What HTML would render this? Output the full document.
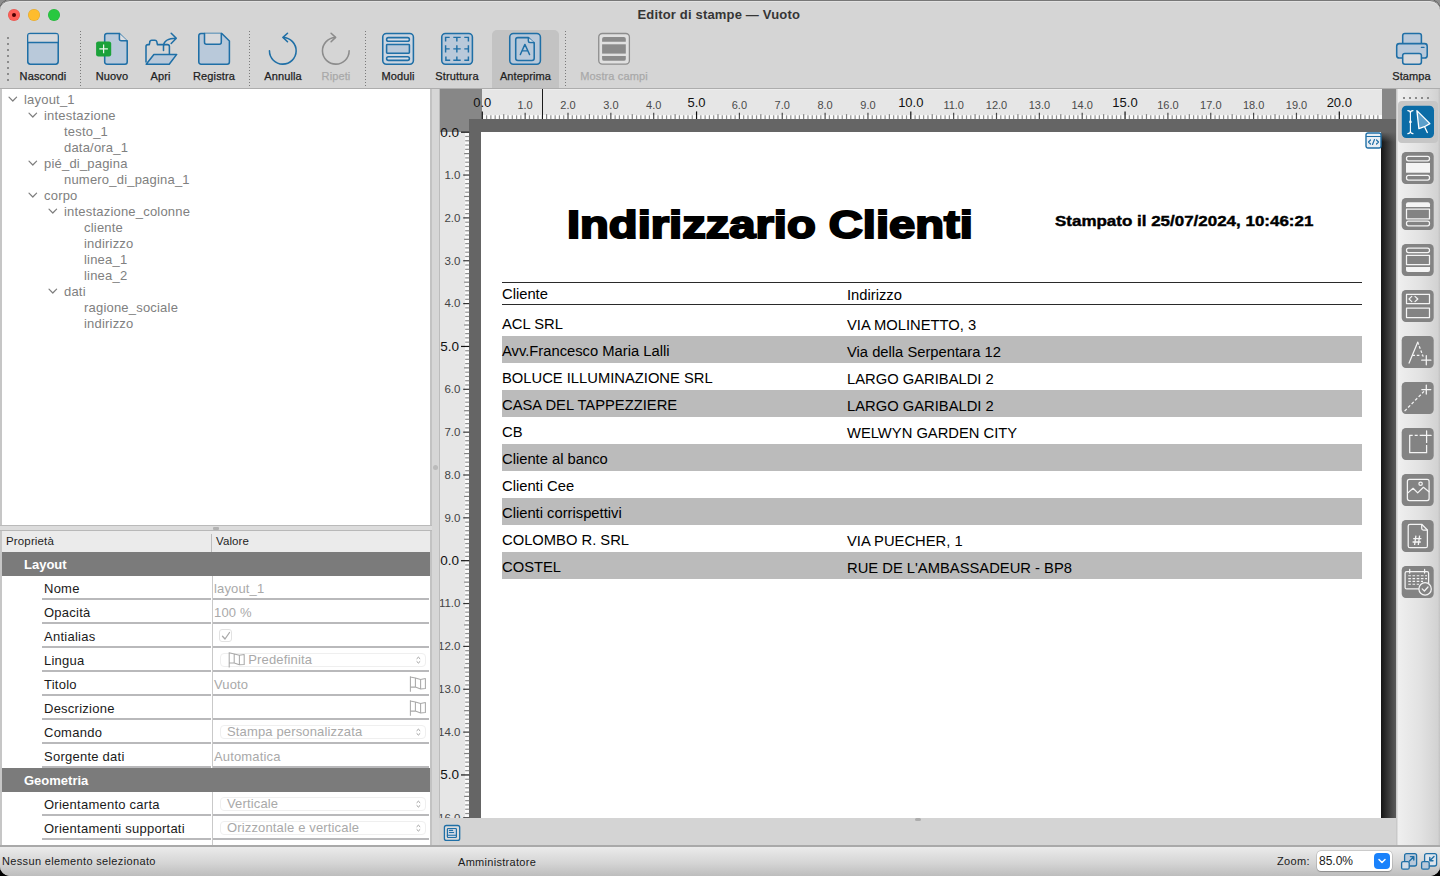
<!DOCTYPE html><html><head><meta charset="utf-8"><title>Editor di stampe</title><style>
*{box-sizing:border-box;margin:0;padding:0}
html,body{width:1440px;height:876px;overflow:hidden;background:#000}
body{font-family:"Liberation Sans",sans-serif;position:relative}
.a{position:absolute}
.win{position:absolute;left:0;top:0;width:1440px;height:876px;border-radius:10px;overflow:hidden;background:#d5d5d5}
.t{position:absolute;white-space:nowrap;line-height:1}
.lbl{position:absolute;font-size:11px;color:#222;-webkit-text-stroke:.25px currentColor;letter-spacing:.12px;white-space:nowrap;line-height:1;transform:translateX(-50%)}
.dis{color:#a9a9a9}
.sep{position:absolute;width:2px;background-image:linear-gradient(#7d7d7d 50%,transparent 50%);background-size:2px 4px;opacity:.75}
.tree{font-size:13px;color:#808080;letter-spacing:.2px}
.prop{font-size:13px;color:#1a1a1a;letter-spacing:.25px}
.val{font-size:13px;color:#a9a9a9;letter-spacing:.15px}
.rpt{font-size:14.75px;color:#000}
</style></head><body>
<div class="a" style="left:0;top:0;width:12px;height:12px;background:radial-gradient(circle at 11px 11px,#111 0,#111 10.5px,#8e8e8e 12.5px)"></div>
<div class="a" style="left:1428px;top:0;width:12px;height:12px;background:radial-gradient(circle at 1px 11px,#111 0,#111 10.5px,#8e8e8e 12.5px)"></div>
<div class="win">
<div class="a" style="left:0;top:0;width:1440px;height:88px;background:#d5d5d5"></div>
<div class="a" style="left:0;top:88px;width:1440px;height:1px;background:#adadad"></div>
<div class="a" style="left:7.5px;top:8.5px;width:12px;height:12px;border-radius:50%;background:#fe5f57;box-shadow:inset 0 0 0 .5px rgba(0,0,0,.12)"></div>
<div class="a" style="left:28px;top:8.5px;width:12px;height:12px;border-radius:50%;background:#febc2e;box-shadow:inset 0 0 0 .5px rgba(0,0,0,.12)"></div>
<div class="a" style="left:48px;top:8.5px;width:12px;height:12px;border-radius:50%;background:#28c840;box-shadow:inset 0 0 0 .5px rgba(0,0,0,.12)"></div>
<div class="a" style="left:11.5px;top:12.5px;width:4px;height:4px;border-radius:50%;background:#4d0000"></div>
<div class="t" style="left:637.5px;top:8px;font-size:13px;font-weight:bold;color:#363636;letter-spacing:.17px">Editor di stampe — Vuoto</div>
<div class="a" style="left:7px;top:37px;width:2px;height:45px;background-image:linear-gradient(#8c8c8c 2px,transparent 2px);background-size:2px 6px"></div>
<div class="a" style="left:80px;top:31px;width:1px;height:56px;background-image:linear-gradient(#7a7a7a 1.2px,transparent 1.2px);background-size:1px 3px"></div>
<div class="a" style="left:249px;top:31px;width:1px;height:56px;background-image:linear-gradient(#7a7a7a 1.2px,transparent 1.2px);background-size:1px 3px"></div>
<div class="a" style="left:365px;top:31px;width:1px;height:56px;background-image:linear-gradient(#7a7a7a 1.2px,transparent 1.2px);background-size:1px 3px"></div>
<div class="a" style="left:565px;top:31px;width:1px;height:56px;background-image:linear-gradient(#7a7a7a 1.2px,transparent 1.2px);background-size:1px 3px"></div>
<div class="a" style="left:492px;top:30px;width:67px;height:58px;background:#c3c3c3;border-radius:5px 5px 0 0"></div>
<svg class="a" style="left:20px;top:28px" width="46" height="42" viewBox="20 28 46 42" fill="none" stroke-linejoin="round" stroke-linecap="round"><rect x="27.75" y="33.5" width="30.45" height="30.7" rx="2.6" fill="#b9c9da" stroke="#1f6fa6" stroke-width="1.55"/><rect x="28.5" y="34.3" width="29" height="8" fill="#d7d9dc"/><path d="M27.75 42.4H58.2" stroke="#1f6fa6" stroke-width="1.55"/></svg>
<svg class="a" style="left:90px;top:28px" width="44" height="42" viewBox="90 28 44 42" fill="none" stroke-linejoin="round" stroke-linecap="round"><path d="M106.9 33.5H119.3L127.2 41.2V62a2.2 2.2 0 0 1-2.2 2.2H106.9a2.2 2.2 0 0 1-2.2-2.2V35.7a2.2 2.2 0 0 1 2.2-2.2Z" fill="#b9c9da" stroke="#1f6fa6" stroke-width="1.55"/><path d="M119.4 33.6V39a1.8 1.8 0 0 0 1.8 1.8H127.1" fill="#dedfe2" stroke="#1f6fa6" stroke-width="1.55"/><rect x="96.1" y="41.4" width="15.1" height="15.1" rx="2.2" fill="#1ba23a"/><path d="M103.6 44.6V53.2M99.3 48.9H107.9" stroke="#eef7ee" stroke-width="1.25" stroke-linecap="butt"/></svg>
<svg class="a" style="left:140px;top:28px" width="44" height="42" viewBox="140 28 44 42" fill="none" stroke-linejoin="round" stroke-linecap="round"><path d="M146 62V46.6a2 2 0 0 1 2-2H149.3L149.8 42a1.9 1.9 0 0 1 1.9-1.8H155a1.9 1.9 0 0 1 1.8 1.4L157.4 44.6H167.4a2 2 0 0 1 2 2V54.4" stroke="#1f6fa6" stroke-width="1.55"/><path d="M146.2 64.2L153.9 54.4H176.7L169.2 64.2Z" fill="#b9c9da" stroke="#1f6fa6" stroke-width="1.55"/><path d="M163.5 50.5V46.2C163.5 41.5 168 38.3 176.2 38.3M171.2 33.3L176.3 38.3L171.2 43.5" stroke="#1f6fa6" stroke-width="1.55"/></svg>
<svg class="a" style="left:192px;top:28px" width="44" height="42" viewBox="192 28 44 42" fill="none" stroke-linejoin="round" stroke-linecap="round"><path d="M201 33.5H221.8L229.4 41V62a2.2 2.2 0 0 1-2.2 2.2H201a2.2 2.2 0 0 1-2.2-2.2V35.7a2.2 2.2 0 0 1 2.2-2.2Z" fill="#b9c9da" stroke="#1f6fa6" stroke-width="1.55"/><path d="M204.5 33.6V42.2a2 2 0 0 0 2 2H219.3a2 2 0 0 0 2-2V33.6" fill="#d7d9dc" stroke="#1f6fa6" stroke-width="1.55"/></svg>
<svg class="a" style="left:262px;top:28px" width="42" height="42" viewBox="262 28 42 42" fill="none" stroke-linejoin="round" stroke-linecap="round"><path d="M269.45 50.8A13.35 13.35 0 1 0 283.2 37.45" stroke="#1f6fa6" stroke-width="1.55"/><path d="M287.5 33.2L283 37.4L287.5 41.8" stroke="#1f6fa6" stroke-width="1.55"/></svg>
<svg class="a" style="left:315px;top:28px" width="42" height="42" viewBox="315 28 42 42" fill="none" stroke-linejoin="round" stroke-linecap="round"><path d="M349.15 50.8A13.35 13.35 0 1 1 335.4 37.45" stroke="#8c8c8c" stroke-width="1.55"/><path d="M331.1 33.2L335.6 37.4L331.1 41.8" stroke="#8c8c8c" stroke-width="1.55"/></svg>
<svg class="a" style="left:376px;top:28px" width="44" height="42" viewBox="376 28 44 42" fill="none" stroke-linejoin="round" stroke-linecap="round"><rect x="382.75" y="33.5" width="30.65" height="30.7" rx="3.6" fill="#cdd6e1" stroke="#1f6fa6" stroke-width="1.55"/><rect x="386.6" y="37.6" width="22.8" height="3.6" rx="1.8" fill="#d6dde6" stroke="#1f6fa6" stroke-width="1.55"/><rect x="386.6" y="44.5" width="22.8" height="8.7" rx=".6" fill="#b9c9da" stroke="#1f6fa6" stroke-width="1.55"/><rect x="386.6" y="56.8" width="22.8" height="3.6" rx="1.8" fill="#d6dde6" stroke="#1f6fa6" stroke-width="1.55"/></svg>
<svg class="a" style="left:435px;top:28px" width="44" height="42" viewBox="435 28 44 42" fill="none" stroke-linejoin="round" stroke-linecap="round"><rect x="441.75" y="33.5" width="30.65" height="30.7" rx="3.6" fill="#b9c9da" stroke="#1f6fa6" stroke-width="1.55"/><path d="M445.6 41.4V37.35H449.7M453.3 37.35H460.7M456.85 37.35V41.4M464.3 37.35H468.4V41.4M445.6 45.3V52.6M445.6 48.85H449.7M453.3 48.85H460.7M456.85 45.3V52.6M464.3 48.85H468.4M468.4 45.3V52.6M445.9 56.5V60.3H450.2M453.3 60.3H460.7M456.85 56.5V60.3M464.3 60.3H468.4V56.5" stroke="#1f6fa6" stroke-width="1.45" stroke-linecap="butt" stroke-linejoin="miter"/></svg>
<svg class="a" style="left:503px;top:28px" width="44" height="42" viewBox="503 28 44 42" fill="none" stroke-linejoin="round" stroke-linecap="round"><rect x="509.75" y="33.5" width="30.65" height="30.7" rx="3.6" fill="#b9c9da" stroke="#1f6fa6" stroke-width="1.55"/><path d="M517.9 37.6H528.4L534.2 43.3V58.2a2.2 2.2 0 0 1-2.2 2.2H517.9a2.2 2.2 0 0 1-2.2-2.2V39.8a2.2 2.2 0 0 1 2.2-2.2Z" fill="#b9c9da" stroke="#1f6fa6" stroke-width="1.55"/><path d="M528.4 37.7V41a1.5 1.5 0 0 0 1.5 1.5H534.1" fill="#dde3ea" stroke="#1f6fa6" stroke-width="1.55"/><path d="M520.3 54.6L524.9 44.4L529.6 54.6M522.3 50.9H527.6" stroke="#1f6fa6" stroke-width="1.4"/></svg>
<svg class="a" style="left:592px;top:28px" width="44" height="42" viewBox="592 28 44 42" fill="none" stroke-linejoin="round" stroke-linecap="round"><rect x="598.75" y="33.5" width="30.65" height="30.7" rx="3.6" fill="#e0e0e0" stroke="#8d8d8d" stroke-width="1.3"/><path d="M604 37.1H623.9a1.9 1.9 0 0 1 1.9 1.9V41.7H602.1V39a1.9 1.9 0 0 1 1.9-1.9Z" fill="#8b8b8b"/><rect x="602.1" y="44.3" width="23.7" height="9.3" fill="#8b8b8b"/><path d="M602.1 56H625.8V58.9a1.9 1.9 0 0 1-1.9 1.9H604a1.9 1.9 0 0 1-1.9-1.9Z" fill="#8b8b8b"/></svg>
<svg class="a" style="left:1390px;top:28px" width="44" height="42" viewBox="1390 28 44 42" fill="none" stroke-linejoin="round" stroke-linecap="round"><rect x="1402.7" y="33.5" width="18.7" height="12" rx="2.2" fill="#b9c9da" stroke="#1f6fa6" stroke-width="1.55"/><rect x="1396.7" y="43.6" width="30.5" height="14.4" rx="2.6" fill="#b9c9da" stroke="#1f6fa6" stroke-width="1.55"/><rect x="1402.7" y="53.4" width="18.7" height="10.8" rx="2.2" fill="#d9dadd" stroke="#1f6fa6" stroke-width="1.55"/><path d="M1421.4 47.4H1424" stroke="#1f6fa6" stroke-width="1.3"/></svg>
<div class="lbl" style="left:43px;top:71px">Nascondi</div>
<div class="lbl" style="left:112px;top:71px">Nuovo</div>
<div class="lbl" style="left:160.5px;top:71px">Apri</div>
<div class="lbl" style="left:214px;top:71px">Registra</div>
<div class="lbl" style="left:283px;top:71px">Annulla</div>
<div class="lbl dis" style="left:336px;top:71px">Ripeti</div>
<div class="lbl" style="left:398px;top:71px">Moduli</div>
<div class="lbl" style="left:457px;top:71px">Struttura</div>
<div class="lbl" style="left:525.5px;top:71px">Anteprima</div>
<div class="lbl dis" style="left:614px;top:71px">Mostra campi</div>
<div class="lbl" style="left:1411.5px;top:71px">Stampa</div>
<div class="a" style="left:0;top:89px;width:432px;height:437px;background:#fff;border-left:2px solid #c6c6c6;border-right:2px solid #c2c2c2"></div>
<div class="t tree" style="left:24px;top:93px">layout_1</div>
<svg class="a" style="left:8px;top:96px;" width="10" height="7" viewBox="0 0 10 7" fill="none" stroke-linejoin="round" stroke-linecap="round"><path d="M1 1.2L4.8 5L8.6 1.2" stroke="#7d7d7d" stroke-width="1.2"/></svg>
<div class="t tree" style="left:44px;top:109px">intestazione</div>
<svg class="a" style="left:28px;top:112px;" width="10" height="7" viewBox="0 0 10 7" fill="none" stroke-linejoin="round" stroke-linecap="round"><path d="M1 1.2L4.8 5L8.6 1.2" stroke="#7d7d7d" stroke-width="1.2"/></svg>
<div class="t tree" style="left:64px;top:125px">testo_1</div>
<div class="t tree" style="left:64px;top:141px">data/ora_1</div>
<div class="t tree" style="left:44px;top:157px">pié_di_pagina</div>
<svg class="a" style="left:28px;top:160px;" width="10" height="7" viewBox="0 0 10 7" fill="none" stroke-linejoin="round" stroke-linecap="round"><path d="M1 1.2L4.8 5L8.6 1.2" stroke="#7d7d7d" stroke-width="1.2"/></svg>
<div class="t tree" style="left:64px;top:173px">numero_di_pagina_1</div>
<div class="t tree" style="left:44px;top:189px">corpo</div>
<svg class="a" style="left:28px;top:192px;" width="10" height="7" viewBox="0 0 10 7" fill="none" stroke-linejoin="round" stroke-linecap="round"><path d="M1 1.2L4.8 5L8.6 1.2" stroke="#7d7d7d" stroke-width="1.2"/></svg>
<div class="t tree" style="left:64px;top:205px">intestazione_colonne</div>
<svg class="a" style="left:48px;top:208px;" width="10" height="7" viewBox="0 0 10 7" fill="none" stroke-linejoin="round" stroke-linecap="round"><path d="M1 1.2L4.8 5L8.6 1.2" stroke="#7d7d7d" stroke-width="1.2"/></svg>
<div class="t tree" style="left:84px;top:221px">cliente</div>
<div class="t tree" style="left:84px;top:237px">indirizzo</div>
<div class="t tree" style="left:84px;top:253px">linea_1</div>
<div class="t tree" style="left:84px;top:269px">linea_2</div>
<div class="t tree" style="left:64px;top:285px">dati</div>
<svg class="a" style="left:48px;top:288px;" width="10" height="7" viewBox="0 0 10 7" fill="none" stroke-linejoin="round" stroke-linecap="round"><path d="M1 1.2L4.8 5L8.6 1.2" stroke="#7d7d7d" stroke-width="1.2"/></svg>
<div class="t tree" style="left:84px;top:301px">ragione_sociale</div>
<div class="t tree" style="left:84px;top:317px">indirizzo</div>
<div class="a" style="left:0;top:525px;width:432px;height:6px;background:#dcdcdc;border-top:1.6px solid #bababa;border-bottom:1.6px solid #b8b8b8"></div>
<div class="a" style="left:213px;top:527px;width:5.5px;height:2.5px;background:#b2b2b2;border-radius:1px"></div>
<div class="a" style="left:0;top:531px;width:432px;height:314px;background:#fff;border-left:2px solid #c6c6c6;border-right:2px solid #c2c2c2"></div>
<div class="a" style="left:2px;top:531px;width:428px;height:21px;background:#ebebeb"></div>
<div class="a" style="left:211px;top:533.5px;width:1px;height:18px;background:#bdbdbd"></div>
<div class="t" style="left:6px;top:535.5px;font-size:11.5px;color:#1e1e1e;letter-spacing:.15px">Proprietà</div>
<div class="t" style="left:216px;top:535.5px;font-size:11.5px;color:#1e1e1e;letter-spacing:.1px">Valore</div>
<div class="a" style="left:2px;top:552px;width:428px;height:24px;background:#7b7b7b"></div>
<div class="t" style="left:24px;top:558px;font-size:13px;font-weight:bold;color:#fff">Layout</div>
<div class="a" style="left:42px;top:598px;width:169px;height:2px;background:#b9b9bb"></div>
<div class="a" style="left:213px;top:598px;width:216px;height:2px;background:#b9b9bb"></div>
<div class="a" style="left:212px;top:576px;width:1px;height:24px;background:#c9c9c9"></div>
<div class="t prop" style="left:44px;top:582px">Nome</div>
<div class="t val" style="left:214px;top:582px">layout_1</div>
<div class="a" style="left:42px;top:622px;width:169px;height:2px;background:#b9b9bb"></div>
<div class="a" style="left:213px;top:622px;width:216px;height:2px;background:#b9b9bb"></div>
<div class="a" style="left:212px;top:600px;width:1px;height:24px;background:#c9c9c9"></div>
<div class="t prop" style="left:44px;top:606px">Opacità</div>
<div class="t val" style="left:214px;top:606px">100 %</div>
<div class="a" style="left:42px;top:646px;width:169px;height:2px;background:#b9b9bb"></div>
<div class="a" style="left:213px;top:646px;width:216px;height:2px;background:#b9b9bb"></div>
<div class="a" style="left:212px;top:624px;width:1px;height:24px;background:#c9c9c9"></div>
<div class="t prop" style="left:44px;top:630px">Antialias</div>
<div class="a" style="left:219px;top:629px;width:13px;height:13px;border:1px solid #e2e2e2;border-radius:3px;background:#fff"></div>
<svg class="a" style="left:220px;top:630px;" width="12" height="12" viewBox="0 0 12 12" fill="none" stroke-linejoin="round" stroke-linecap="round"><path d="M2.5 6.3L5 9L9.5 2.5" stroke="#a9a9a9" stroke-width="1.3"/></svg>
<div class="a" style="left:42px;top:670px;width:169px;height:2px;background:#b9b9bb"></div>
<div class="a" style="left:213px;top:670px;width:216px;height:2px;background:#b9b9bb"></div>
<div class="a" style="left:212px;top:648px;width:1px;height:24px;background:#c9c9c9"></div>
<div class="t prop" style="left:44px;top:654px">Lingua</div>
<div class="a" style="left:220px;top:652.5px;width:206px;height:14.5px;border:1px solid #efefef;border-radius:4px;background:#fff"></div>
<svg class="a" style="left:0;top:0" width="440" height="876" fill="none"><path d="M229.2 652.2V667.6M229.2 652.8000000000001L234.2 653.9000000000001L239.39999999999998 655.3000000000001L244.2 654.5V664.5L239.39999999999998 664.8000000000001L234.2 663.0L229.2 663.0M234.2 653.9000000000001V663.0M239.39999999999998 655.3000000000001V664.8000000000001" stroke="#a9a9a9" stroke-width="1.05" stroke-linejoin="round"/></svg>
<div class="t val" style="left:248.3px;top:653.4px">Predefinita</div>
<svg class="a" style="left:414px;top:653px;" width="8" height="14" viewBox="0 0 8 14" fill="none" stroke-linejoin="round" stroke-linecap="round"><path d="M2.9 5.6L4.4 4.2L5.9 5.6M2.9 8.6L4.4 10L5.9 8.6" stroke="#9c9c9c" stroke-width="1"/></svg>
<div class="a" style="left:42px;top:694px;width:169px;height:2px;background:#b9b9bb"></div>
<div class="a" style="left:213px;top:694px;width:216px;height:2px;background:#b9b9bb"></div>
<div class="a" style="left:212px;top:672px;width:1px;height:24px;background:#c9c9c9"></div>
<div class="t prop" style="left:44px;top:678px">Titolo</div>
<div class="t val" style="left:214px;top:678px">Vuoto</div>
<svg class="a" style="left:0;top:0" width="440" height="876" fill="none"><path d="M410.4 676.3V691.6999999999999M410.4 676.9L415.4 678.0L420.59999999999997 679.4L425.4 678.5999999999999V688.5999999999999L420.59999999999997 688.9L415.4 687.0999999999999L410.4 687.0999999999999M415.4 678.0V687.0999999999999M420.59999999999997 679.4V688.9" stroke="#a9a9a9" stroke-width="1.05" stroke-linejoin="round"/></svg>
<div class="a" style="left:42px;top:718px;width:169px;height:2px;background:#b9b9bb"></div>
<div class="a" style="left:213px;top:718px;width:216px;height:2px;background:#b9b9bb"></div>
<div class="a" style="left:212px;top:696px;width:1px;height:24px;background:#c9c9c9"></div>
<div class="t prop" style="left:44px;top:702px">Descrizione</div>
<svg class="a" style="left:0;top:0" width="440" height="876" fill="none"><path d="M410.4 700.3V715.6999999999999M410.4 700.9L415.4 702.0L420.59999999999997 703.4L425.4 702.5999999999999V712.5999999999999L420.59999999999997 712.9L415.4 711.0999999999999L410.4 711.0999999999999M415.4 702.0V711.0999999999999M420.59999999999997 703.4V712.9" stroke="#a9a9a9" stroke-width="1.05" stroke-linejoin="round"/></svg>
<div class="a" style="left:42px;top:742px;width:169px;height:2px;background:#b9b9bb"></div>
<div class="a" style="left:213px;top:742px;width:216px;height:2px;background:#b9b9bb"></div>
<div class="a" style="left:212px;top:720px;width:1px;height:24px;background:#c9c9c9"></div>
<div class="t prop" style="left:44px;top:726px">Comando</div>
<div class="a" style="left:220px;top:724.5px;width:206px;height:14.5px;border:1px solid #efefef;border-radius:4px;background:#fff"></div>
<div class="t val" style="left:227px;top:725.4px">Stampa personalizzata</div>
<svg class="a" style="left:414px;top:725px;" width="8" height="14" viewBox="0 0 8 14" fill="none" stroke-linejoin="round" stroke-linecap="round"><path d="M2.9 5.6L4.4 4.2L5.9 5.6M2.9 8.6L4.4 10L5.9 8.6" stroke="#9c9c9c" stroke-width="1"/></svg>
<div class="a" style="left:42px;top:766px;width:169px;height:2px;background:#b9b9bb"></div>
<div class="a" style="left:213px;top:766px;width:216px;height:2px;background:#b9b9bb"></div>
<div class="a" style="left:212px;top:744px;width:1px;height:24px;background:#c9c9c9"></div>
<div class="t prop" style="left:44px;top:750px">Sorgente dati</div>
<div class="t val" style="left:214px;top:750px">Automatica</div>
<div class="a" style="left:2px;top:768px;width:428px;height:24px;background:#7b7b7b"></div>
<div class="t" style="left:24px;top:774px;font-size:13px;font-weight:bold;color:#fff">Geometria</div>
<div class="a" style="left:42px;top:814px;width:169px;height:2px;background:#b9b9bb"></div>
<div class="a" style="left:213px;top:814px;width:216px;height:2px;background:#b9b9bb"></div>
<div class="a" style="left:212px;top:792px;width:1px;height:24px;background:#c9c9c9"></div>
<div class="t prop" style="left:44px;top:798px">Orientamento carta</div>
<div class="a" style="left:220px;top:796.5px;width:206px;height:14.5px;border:1px solid #efefef;border-radius:4px;background:#fff"></div>
<div class="t val" style="left:227px;top:797.4px">Verticale</div>
<svg class="a" style="left:414px;top:797px;" width="8" height="14" viewBox="0 0 8 14" fill="none" stroke-linejoin="round" stroke-linecap="round"><path d="M2.9 5.6L4.4 4.2L5.9 5.6M2.9 8.6L4.4 10L5.9 8.6" stroke="#9c9c9c" stroke-width="1"/></svg>
<div class="a" style="left:42px;top:838px;width:169px;height:2px;background:#b9b9bb"></div>
<div class="a" style="left:213px;top:838px;width:216px;height:2px;background:#b9b9bb"></div>
<div class="a" style="left:212px;top:816px;width:1px;height:24px;background:#c9c9c9"></div>
<div class="t prop" style="left:44px;top:822px">Orientamenti supportati</div>
<div class="a" style="left:220px;top:820.5px;width:206px;height:14.5px;border:1px solid #efefef;border-radius:4px;background:#fff"></div>
<div class="t val" style="left:227px;top:821.4px">Orizzontale e verticale</div>
<svg class="a" style="left:414px;top:821px;" width="8" height="14" viewBox="0 0 8 14" fill="none" stroke-linejoin="round" stroke-linecap="round"><path d="M2.9 5.6L4.4 4.2L5.9 5.6M2.9 8.6L4.4 10L5.9 8.6" stroke="#9c9c9c" stroke-width="1"/></svg>
<div class="a" style="left:42px;top:862px;width:169px;height:2px;background:#b9b9bb"></div>
<div class="a" style="left:213px;top:862px;width:216px;height:2px;background:#b9b9bb"></div>
<div class="a" style="left:212px;top:840px;width:1px;height:24px;background:#c9c9c9"></div>
<div class="a" style="left:432px;top:89px;width:7px;height:756px;background:#d6d6d6"></div>
<div class="a" style="left:439px;top:89px;width:1px;height:729px;background:#bdbdbd"></div>
<div class="a" style="left:433px;top:465px;width:5px;height:5px;background:#bababa;border-radius:50%"></div>
<div class="a" style="left:440px;top:89px;width:956px;height:729px;background:#656565;overflow:hidden">
<div class="a" style="left:41.30000000000001px;top:42.5px;width:900.0px;height:800px;background:#fff"></div>
<div class="a" style="left:941.3px;top:42.5px;width:14.7px;height:800px;background:linear-gradient(90deg,#141414,#2e2e2e 35%,#4a4a4a 75%,#5a5a5a)"></div>
<div class="a" style="left:941.3px;top:42.5px;width:14.7px;height:10px;background:linear-gradient(#656565,rgba(101,101,101,0))"></div>
</div>
<div class="a" style="left:440px;top:89px;width:956px;height:30px;background:#878787"></div>
<div class="a" style="left:482.3px;top:89px;width:899.7px;height:30px;background:#e6e6e6"></div>
<div class="a" style="left:482.3px;top:89px;width:899.7px;height:1px;background:#ededed"></div>
<div class="a" style="left:482.3px;top:115px;width:899.7px;height:4px;background:#fbfbfb"></div>
<div class="a" style="left:440px;top:89px;width:29.2px;height:729px;background:#878787"></div>
<div class="a" style="left:440px;top:131.7px;width:29.2px;height:687px;background:#e6e6e6"></div>
<div class="a" style="left:465px;top:131.7px;width:4.2px;height:687px;background:#fbfbfb"></div>
<div class="a" style="left:439px;top:89px;width:1px;height:729px;background:#bcbcbc"></div>
<svg class="a" style="left:0;top:0" width="1440" height="876"><path d="M482.30 111.4V119" stroke="#111" stroke-width="1.2"/><path d="M486.59 115.3V119" stroke="#8e8e8e" stroke-width="1.2"/><path d="M490.87 115.3V119" stroke="#8e8e8e" stroke-width="1.2"/><path d="M495.16 115.3V119" stroke="#8e8e8e" stroke-width="1.2"/><path d="M499.44 115.3V119" stroke="#8e8e8e" stroke-width="1.2"/><path d="M503.73 114.2V119" stroke="#7d7d7d" stroke-width="1.2"/><path d="M508.01 115.3V119" stroke="#8e8e8e" stroke-width="1.2"/><path d="M512.29 115.3V119" stroke="#8e8e8e" stroke-width="1.2"/><path d="M516.58 115.3V119" stroke="#8e8e8e" stroke-width="1.2"/><path d="M520.87 115.3V119" stroke="#8e8e8e" stroke-width="1.2"/><path d="M525.15 112.8V119" stroke="#4a4a4a" stroke-width="1.2"/><path d="M529.44 115.3V119" stroke="#8e8e8e" stroke-width="1.2"/><path d="M533.72 115.3V119" stroke="#8e8e8e" stroke-width="1.2"/><path d="M538.00 115.3V119" stroke="#8e8e8e" stroke-width="1.2"/><path d="M542.29 115.3V119" stroke="#8e8e8e" stroke-width="1.2"/><path d="M546.58 114.2V119" stroke="#7d7d7d" stroke-width="1.2"/><path d="M550.86 115.3V119" stroke="#8e8e8e" stroke-width="1.2"/><path d="M555.14 115.3V119" stroke="#8e8e8e" stroke-width="1.2"/><path d="M559.43 115.3V119" stroke="#8e8e8e" stroke-width="1.2"/><path d="M563.72 115.3V119" stroke="#8e8e8e" stroke-width="1.2"/><path d="M568.00 112.8V119" stroke="#4a4a4a" stroke-width="1.2"/><path d="M572.28 115.3V119" stroke="#8e8e8e" stroke-width="1.2"/><path d="M576.57 115.3V119" stroke="#8e8e8e" stroke-width="1.2"/><path d="M580.86 115.3V119" stroke="#8e8e8e" stroke-width="1.2"/><path d="M585.14 115.3V119" stroke="#8e8e8e" stroke-width="1.2"/><path d="M589.42 114.2V119" stroke="#7d7d7d" stroke-width="1.2"/><path d="M593.71 115.3V119" stroke="#8e8e8e" stroke-width="1.2"/><path d="M598.00 115.3V119" stroke="#8e8e8e" stroke-width="1.2"/><path d="M602.28 115.3V119" stroke="#8e8e8e" stroke-width="1.2"/><path d="M606.57 115.3V119" stroke="#8e8e8e" stroke-width="1.2"/><path d="M610.85 112.8V119" stroke="#4a4a4a" stroke-width="1.2"/><path d="M615.13 115.3V119" stroke="#8e8e8e" stroke-width="1.2"/><path d="M619.42 115.3V119" stroke="#8e8e8e" stroke-width="1.2"/><path d="M623.71 115.3V119" stroke="#8e8e8e" stroke-width="1.2"/><path d="M627.99 115.3V119" stroke="#8e8e8e" stroke-width="1.2"/><path d="M632.27 114.2V119" stroke="#7d7d7d" stroke-width="1.2"/><path d="M636.56 115.3V119" stroke="#8e8e8e" stroke-width="1.2"/><path d="M640.85 115.3V119" stroke="#8e8e8e" stroke-width="1.2"/><path d="M645.13 115.3V119" stroke="#8e8e8e" stroke-width="1.2"/><path d="M649.41 115.3V119" stroke="#8e8e8e" stroke-width="1.2"/><path d="M653.70 112.8V119" stroke="#4a4a4a" stroke-width="1.2"/><path d="M657.99 115.3V119" stroke="#8e8e8e" stroke-width="1.2"/><path d="M662.27 115.3V119" stroke="#8e8e8e" stroke-width="1.2"/><path d="M666.56 115.3V119" stroke="#8e8e8e" stroke-width="1.2"/><path d="M670.84 115.3V119" stroke="#8e8e8e" stroke-width="1.2"/><path d="M675.12 114.2V119" stroke="#7d7d7d" stroke-width="1.2"/><path d="M679.41 115.3V119" stroke="#8e8e8e" stroke-width="1.2"/><path d="M683.70 115.3V119" stroke="#8e8e8e" stroke-width="1.2"/><path d="M687.98 115.3V119" stroke="#8e8e8e" stroke-width="1.2"/><path d="M692.26 115.3V119" stroke="#8e8e8e" stroke-width="1.2"/><path d="M696.55 111.4V119" stroke="#111" stroke-width="1.2"/><path d="M700.84 115.3V119" stroke="#8e8e8e" stroke-width="1.2"/><path d="M705.12 115.3V119" stroke="#8e8e8e" stroke-width="1.2"/><path d="M709.40 115.3V119" stroke="#8e8e8e" stroke-width="1.2"/><path d="M713.69 115.3V119" stroke="#8e8e8e" stroke-width="1.2"/><path d="M717.98 114.2V119" stroke="#7d7d7d" stroke-width="1.2"/><path d="M722.26 115.3V119" stroke="#8e8e8e" stroke-width="1.2"/><path d="M726.55 115.3V119" stroke="#8e8e8e" stroke-width="1.2"/><path d="M730.83 115.3V119" stroke="#8e8e8e" stroke-width="1.2"/><path d="M735.12 115.3V119" stroke="#8e8e8e" stroke-width="1.2"/><path d="M739.40 112.8V119" stroke="#4a4a4a" stroke-width="1.2"/><path d="M743.68 115.3V119" stroke="#8e8e8e" stroke-width="1.2"/><path d="M747.97 115.3V119" stroke="#8e8e8e" stroke-width="1.2"/><path d="M752.26 115.3V119" stroke="#8e8e8e" stroke-width="1.2"/><path d="M756.54 115.3V119" stroke="#8e8e8e" stroke-width="1.2"/><path d="M760.83 114.2V119" stroke="#7d7d7d" stroke-width="1.2"/><path d="M765.11 115.3V119" stroke="#8e8e8e" stroke-width="1.2"/><path d="M769.39 115.3V119" stroke="#8e8e8e" stroke-width="1.2"/><path d="M773.68 115.3V119" stroke="#8e8e8e" stroke-width="1.2"/><path d="M777.97 115.3V119" stroke="#8e8e8e" stroke-width="1.2"/><path d="M782.25 112.8V119" stroke="#4a4a4a" stroke-width="1.2"/><path d="M786.54 115.3V119" stroke="#8e8e8e" stroke-width="1.2"/><path d="M790.82 115.3V119" stroke="#8e8e8e" stroke-width="1.2"/><path d="M795.11 115.3V119" stroke="#8e8e8e" stroke-width="1.2"/><path d="M799.39 115.3V119" stroke="#8e8e8e" stroke-width="1.2"/><path d="M803.67 114.2V119" stroke="#7d7d7d" stroke-width="1.2"/><path d="M807.96 115.3V119" stroke="#8e8e8e" stroke-width="1.2"/><path d="M812.25 115.3V119" stroke="#8e8e8e" stroke-width="1.2"/><path d="M816.53 115.3V119" stroke="#8e8e8e" stroke-width="1.2"/><path d="M820.82 115.3V119" stroke="#8e8e8e" stroke-width="1.2"/><path d="M825.10 112.8V119" stroke="#4a4a4a" stroke-width="1.2"/><path d="M829.38 115.3V119" stroke="#8e8e8e" stroke-width="1.2"/><path d="M833.67 115.3V119" stroke="#8e8e8e" stroke-width="1.2"/><path d="M837.96 115.3V119" stroke="#8e8e8e" stroke-width="1.2"/><path d="M842.24 115.3V119" stroke="#8e8e8e" stroke-width="1.2"/><path d="M846.53 114.2V119" stroke="#7d7d7d" stroke-width="1.2"/><path d="M850.81 115.3V119" stroke="#8e8e8e" stroke-width="1.2"/><path d="M855.10 115.3V119" stroke="#8e8e8e" stroke-width="1.2"/><path d="M859.38 115.3V119" stroke="#8e8e8e" stroke-width="1.2"/><path d="M863.66 115.3V119" stroke="#8e8e8e" stroke-width="1.2"/><path d="M867.95 112.8V119" stroke="#4a4a4a" stroke-width="1.2"/><path d="M872.24 115.3V119" stroke="#8e8e8e" stroke-width="1.2"/><path d="M876.52 115.3V119" stroke="#8e8e8e" stroke-width="1.2"/><path d="M880.81 115.3V119" stroke="#8e8e8e" stroke-width="1.2"/><path d="M885.09 115.3V119" stroke="#8e8e8e" stroke-width="1.2"/><path d="M889.38 114.2V119" stroke="#7d7d7d" stroke-width="1.2"/><path d="M893.66 115.3V119" stroke="#8e8e8e" stroke-width="1.2"/><path d="M897.94 115.3V119" stroke="#8e8e8e" stroke-width="1.2"/><path d="M902.23 115.3V119" stroke="#8e8e8e" stroke-width="1.2"/><path d="M906.52 115.3V119" stroke="#8e8e8e" stroke-width="1.2"/><path d="M910.80 111.4V119" stroke="#111" stroke-width="1.2"/><path d="M915.09 115.3V119" stroke="#8e8e8e" stroke-width="1.2"/><path d="M919.37 115.3V119" stroke="#8e8e8e" stroke-width="1.2"/><path d="M923.65 115.3V119" stroke="#8e8e8e" stroke-width="1.2"/><path d="M927.94 115.3V119" stroke="#8e8e8e" stroke-width="1.2"/><path d="M932.23 114.2V119" stroke="#7d7d7d" stroke-width="1.2"/><path d="M936.51 115.3V119" stroke="#8e8e8e" stroke-width="1.2"/><path d="M940.80 115.3V119" stroke="#8e8e8e" stroke-width="1.2"/><path d="M945.08 115.3V119" stroke="#8e8e8e" stroke-width="1.2"/><path d="M949.37 115.3V119" stroke="#8e8e8e" stroke-width="1.2"/><path d="M953.65 112.8V119" stroke="#4a4a4a" stroke-width="1.2"/><path d="M957.94 115.3V119" stroke="#8e8e8e" stroke-width="1.2"/><path d="M962.22 115.3V119" stroke="#8e8e8e" stroke-width="1.2"/><path d="M966.51 115.3V119" stroke="#8e8e8e" stroke-width="1.2"/><path d="M970.79 115.3V119" stroke="#8e8e8e" stroke-width="1.2"/><path d="M975.08 114.2V119" stroke="#7d7d7d" stroke-width="1.2"/><path d="M979.36 115.3V119" stroke="#8e8e8e" stroke-width="1.2"/><path d="M983.64 115.3V119" stroke="#8e8e8e" stroke-width="1.2"/><path d="M987.93 115.3V119" stroke="#8e8e8e" stroke-width="1.2"/><path d="M992.22 115.3V119" stroke="#8e8e8e" stroke-width="1.2"/><path d="M996.50 112.8V119" stroke="#4a4a4a" stroke-width="1.2"/><path d="M1000.79 115.3V119" stroke="#8e8e8e" stroke-width="1.2"/><path d="M1005.07 115.3V119" stroke="#8e8e8e" stroke-width="1.2"/><path d="M1009.36 115.3V119" stroke="#8e8e8e" stroke-width="1.2"/><path d="M1013.64 115.3V119" stroke="#8e8e8e" stroke-width="1.2"/><path d="M1017.92 114.2V119" stroke="#7d7d7d" stroke-width="1.2"/><path d="M1022.21 115.3V119" stroke="#8e8e8e" stroke-width="1.2"/><path d="M1026.49 115.3V119" stroke="#8e8e8e" stroke-width="1.2"/><path d="M1030.78 115.3V119" stroke="#8e8e8e" stroke-width="1.2"/><path d="M1035.07 115.3V119" stroke="#8e8e8e" stroke-width="1.2"/><path d="M1039.35 112.8V119" stroke="#4a4a4a" stroke-width="1.2"/><path d="M1043.63 115.3V119" stroke="#8e8e8e" stroke-width="1.2"/><path d="M1047.92 115.3V119" stroke="#8e8e8e" stroke-width="1.2"/><path d="M1052.20 115.3V119" stroke="#8e8e8e" stroke-width="1.2"/><path d="M1056.49 115.3V119" stroke="#8e8e8e" stroke-width="1.2"/><path d="M1060.78 114.2V119" stroke="#7d7d7d" stroke-width="1.2"/><path d="M1065.06 115.3V119" stroke="#8e8e8e" stroke-width="1.2"/><path d="M1069.35 115.3V119" stroke="#8e8e8e" stroke-width="1.2"/><path d="M1073.63 115.3V119" stroke="#8e8e8e" stroke-width="1.2"/><path d="M1077.91 115.3V119" stroke="#8e8e8e" stroke-width="1.2"/><path d="M1082.20 112.8V119" stroke="#4a4a4a" stroke-width="1.2"/><path d="M1086.49 115.3V119" stroke="#8e8e8e" stroke-width="1.2"/><path d="M1090.77 115.3V119" stroke="#8e8e8e" stroke-width="1.2"/><path d="M1095.06 115.3V119" stroke="#8e8e8e" stroke-width="1.2"/><path d="M1099.34 115.3V119" stroke="#8e8e8e" stroke-width="1.2"/><path d="M1103.62 114.2V119" stroke="#7d7d7d" stroke-width="1.2"/><path d="M1107.91 115.3V119" stroke="#8e8e8e" stroke-width="1.2"/><path d="M1112.19 115.3V119" stroke="#8e8e8e" stroke-width="1.2"/><path d="M1116.48 115.3V119" stroke="#8e8e8e" stroke-width="1.2"/><path d="M1120.77 115.3V119" stroke="#8e8e8e" stroke-width="1.2"/><path d="M1125.05 111.4V119" stroke="#111" stroke-width="1.2"/><path d="M1129.34 115.3V119" stroke="#8e8e8e" stroke-width="1.2"/><path d="M1133.62 115.3V119" stroke="#8e8e8e" stroke-width="1.2"/><path d="M1137.90 115.3V119" stroke="#8e8e8e" stroke-width="1.2"/><path d="M1142.19 115.3V119" stroke="#8e8e8e" stroke-width="1.2"/><path d="M1146.47 114.2V119" stroke="#7d7d7d" stroke-width="1.2"/><path d="M1150.76 115.3V119" stroke="#8e8e8e" stroke-width="1.2"/><path d="M1155.05 115.3V119" stroke="#8e8e8e" stroke-width="1.2"/><path d="M1159.33 115.3V119" stroke="#8e8e8e" stroke-width="1.2"/><path d="M1163.62 115.3V119" stroke="#8e8e8e" stroke-width="1.2"/><path d="M1167.90 112.8V119" stroke="#4a4a4a" stroke-width="1.2"/><path d="M1172.18 115.3V119" stroke="#8e8e8e" stroke-width="1.2"/><path d="M1176.47 115.3V119" stroke="#8e8e8e" stroke-width="1.2"/><path d="M1180.76 115.3V119" stroke="#8e8e8e" stroke-width="1.2"/><path d="M1185.04 115.3V119" stroke="#8e8e8e" stroke-width="1.2"/><path d="M1189.33 114.2V119" stroke="#7d7d7d" stroke-width="1.2"/><path d="M1193.61 115.3V119" stroke="#8e8e8e" stroke-width="1.2"/><path d="M1197.89 115.3V119" stroke="#8e8e8e" stroke-width="1.2"/><path d="M1202.18 115.3V119" stroke="#8e8e8e" stroke-width="1.2"/><path d="M1206.47 115.3V119" stroke="#8e8e8e" stroke-width="1.2"/><path d="M1210.75 112.8V119" stroke="#4a4a4a" stroke-width="1.2"/><path d="M1215.04 115.3V119" stroke="#8e8e8e" stroke-width="1.2"/><path d="M1219.32 115.3V119" stroke="#8e8e8e" stroke-width="1.2"/><path d="M1223.61 115.3V119" stroke="#8e8e8e" stroke-width="1.2"/><path d="M1227.89 115.3V119" stroke="#8e8e8e" stroke-width="1.2"/><path d="M1232.17 114.2V119" stroke="#7d7d7d" stroke-width="1.2"/><path d="M1236.46 115.3V119" stroke="#8e8e8e" stroke-width="1.2"/><path d="M1240.74 115.3V119" stroke="#8e8e8e" stroke-width="1.2"/><path d="M1245.03 115.3V119" stroke="#8e8e8e" stroke-width="1.2"/><path d="M1249.32 115.3V119" stroke="#8e8e8e" stroke-width="1.2"/><path d="M1253.60 112.8V119" stroke="#4a4a4a" stroke-width="1.2"/><path d="M1257.88 115.3V119" stroke="#8e8e8e" stroke-width="1.2"/><path d="M1262.17 115.3V119" stroke="#8e8e8e" stroke-width="1.2"/><path d="M1266.45 115.3V119" stroke="#8e8e8e" stroke-width="1.2"/><path d="M1270.74 115.3V119" stroke="#8e8e8e" stroke-width="1.2"/><path d="M1275.03 114.2V119" stroke="#7d7d7d" stroke-width="1.2"/><path d="M1279.31 115.3V119" stroke="#8e8e8e" stroke-width="1.2"/><path d="M1283.60 115.3V119" stroke="#8e8e8e" stroke-width="1.2"/><path d="M1287.88 115.3V119" stroke="#8e8e8e" stroke-width="1.2"/><path d="M1292.16 115.3V119" stroke="#8e8e8e" stroke-width="1.2"/><path d="M1296.45 112.8V119" stroke="#4a4a4a" stroke-width="1.2"/><path d="M1300.74 115.3V119" stroke="#8e8e8e" stroke-width="1.2"/><path d="M1305.02 115.3V119" stroke="#8e8e8e" stroke-width="1.2"/><path d="M1309.31 115.3V119" stroke="#8e8e8e" stroke-width="1.2"/><path d="M1313.59 115.3V119" stroke="#8e8e8e" stroke-width="1.2"/><path d="M1317.88 114.2V119" stroke="#7d7d7d" stroke-width="1.2"/><path d="M1322.16 115.3V119" stroke="#8e8e8e" stroke-width="1.2"/><path d="M1326.45 115.3V119" stroke="#8e8e8e" stroke-width="1.2"/><path d="M1330.73 115.3V119" stroke="#8e8e8e" stroke-width="1.2"/><path d="M1335.01 115.3V119" stroke="#8e8e8e" stroke-width="1.2"/><path d="M1339.30 111.4V119" stroke="#111" stroke-width="1.2"/><path d="M1343.59 115.3V119" stroke="#8e8e8e" stroke-width="1.2"/><path d="M1347.87 115.3V119" stroke="#8e8e8e" stroke-width="1.2"/><path d="M1352.16 115.3V119" stroke="#8e8e8e" stroke-width="1.2"/><path d="M1356.44 115.3V119" stroke="#8e8e8e" stroke-width="1.2"/><path d="M1360.72 114.2V119" stroke="#7d7d7d" stroke-width="1.2"/><path d="M1365.01 115.3V119" stroke="#8e8e8e" stroke-width="1.2"/><path d="M1369.30 115.3V119" stroke="#8e8e8e" stroke-width="1.2"/><path d="M1373.58 115.3V119" stroke="#8e8e8e" stroke-width="1.2"/><path d="M1377.87 115.3V119" stroke="#8e8e8e" stroke-width="1.2"/></svg>
<div class="t" style="left:482.3px;top:96px;font-size:13px;color:#111;transform:translateX(-50%)">0.0</div>
<div class="t" style="left:525.1px;top:100px;font-size:11px;color:#4a4a4a;transform:translateX(-50%)">1.0</div>
<div class="t" style="left:568.0px;top:100px;font-size:11px;color:#4a4a4a;transform:translateX(-50%)">2.0</div>
<div class="t" style="left:610.9px;top:100px;font-size:11px;color:#4a4a4a;transform:translateX(-50%)">3.0</div>
<div class="t" style="left:653.7px;top:100px;font-size:11px;color:#4a4a4a;transform:translateX(-50%)">4.0</div>
<div class="t" style="left:696.5px;top:96px;font-size:13px;color:#111;transform:translateX(-50%)">5.0</div>
<div class="t" style="left:739.4px;top:100px;font-size:11px;color:#4a4a4a;transform:translateX(-50%)">6.0</div>
<div class="t" style="left:782.2px;top:100px;font-size:11px;color:#4a4a4a;transform:translateX(-50%)">7.0</div>
<div class="t" style="left:825.1px;top:100px;font-size:11px;color:#4a4a4a;transform:translateX(-50%)">8.0</div>
<div class="t" style="left:868.0px;top:100px;font-size:11px;color:#4a4a4a;transform:translateX(-50%)">9.0</div>
<div class="t" style="left:910.8px;top:96px;font-size:13px;color:#111;transform:translateX(-50%)">10.0</div>
<div class="t" style="left:953.7px;top:100px;font-size:11px;color:#4a4a4a;transform:translateX(-50%)">11.0</div>
<div class="t" style="left:996.5px;top:100px;font-size:11px;color:#4a4a4a;transform:translateX(-50%)">12.0</div>
<div class="t" style="left:1039.4px;top:100px;font-size:11px;color:#4a4a4a;transform:translateX(-50%)">13.0</div>
<div class="t" style="left:1082.2px;top:100px;font-size:11px;color:#4a4a4a;transform:translateX(-50%)">14.0</div>
<div class="t" style="left:1125.0px;top:96px;font-size:13px;color:#111;transform:translateX(-50%)">15.0</div>
<div class="t" style="left:1167.9px;top:100px;font-size:11px;color:#4a4a4a;transform:translateX(-50%)">16.0</div>
<div class="t" style="left:1210.8px;top:100px;font-size:11px;color:#4a4a4a;transform:translateX(-50%)">17.0</div>
<div class="t" style="left:1253.6px;top:100px;font-size:11px;color:#4a4a4a;transform:translateX(-50%)">18.0</div>
<div class="t" style="left:1296.5px;top:100px;font-size:11px;color:#4a4a4a;transform:translateX(-50%)">19.0</div>
<div class="t" style="left:1339.3px;top:96px;font-size:13px;color:#111;transform:translateX(-50%)">20.0</div>
<div class="a" style="left:542px;top:89px;width:1px;height:30px;background:#1a1a1a"></div>
<svg class="a" style="left:0;top:0;width:1440px;height:818px" width="1440" height="818"><path d="M461 132.20H469.2" stroke="#111" stroke-width="1.2"/><path d="M465.2 136.48H469.2" stroke="#8e8e8e" stroke-width="1.2"/><path d="M465.2 140.77H469.2" stroke="#8e8e8e" stroke-width="1.2"/><path d="M465.2 145.05H469.2" stroke="#8e8e8e" stroke-width="1.2"/><path d="M465.2 149.34H469.2" stroke="#8e8e8e" stroke-width="1.2"/><path d="M464.2 153.62H469.2" stroke="#7d7d7d" stroke-width="1.2"/><path d="M465.2 157.91H469.2" stroke="#8e8e8e" stroke-width="1.2"/><path d="M465.2 162.19H469.2" stroke="#8e8e8e" stroke-width="1.2"/><path d="M465.2 166.48H469.2" stroke="#8e8e8e" stroke-width="1.2"/><path d="M465.2 170.76H469.2" stroke="#8e8e8e" stroke-width="1.2"/><path d="M463.2 175.05H469.2" stroke="#333" stroke-width="1.2"/><path d="M465.2 179.33H469.2" stroke="#8e8e8e" stroke-width="1.2"/><path d="M465.2 183.62H469.2" stroke="#8e8e8e" stroke-width="1.2"/><path d="M465.2 187.91H469.2" stroke="#8e8e8e" stroke-width="1.2"/><path d="M465.2 192.19H469.2" stroke="#8e8e8e" stroke-width="1.2"/><path d="M464.2 196.47H469.2" stroke="#7d7d7d" stroke-width="1.2"/><path d="M465.2 200.76H469.2" stroke="#8e8e8e" stroke-width="1.2"/><path d="M465.2 205.04H469.2" stroke="#8e8e8e" stroke-width="1.2"/><path d="M465.2 209.33H469.2" stroke="#8e8e8e" stroke-width="1.2"/><path d="M465.2 213.61H469.2" stroke="#8e8e8e" stroke-width="1.2"/><path d="M463.2 217.90H469.2" stroke="#333" stroke-width="1.2"/><path d="M465.2 222.19H469.2" stroke="#8e8e8e" stroke-width="1.2"/><path d="M465.2 226.47H469.2" stroke="#8e8e8e" stroke-width="1.2"/><path d="M465.2 230.75H469.2" stroke="#8e8e8e" stroke-width="1.2"/><path d="M465.2 235.04H469.2" stroke="#8e8e8e" stroke-width="1.2"/><path d="M464.2 239.32H469.2" stroke="#7d7d7d" stroke-width="1.2"/><path d="M465.2 243.61H469.2" stroke="#8e8e8e" stroke-width="1.2"/><path d="M465.2 247.89H469.2" stroke="#8e8e8e" stroke-width="1.2"/><path d="M465.2 252.18H469.2" stroke="#8e8e8e" stroke-width="1.2"/><path d="M465.2 256.47H469.2" stroke="#8e8e8e" stroke-width="1.2"/><path d="M463.2 260.75H469.2" stroke="#333" stroke-width="1.2"/><path d="M465.2 265.03H469.2" stroke="#8e8e8e" stroke-width="1.2"/><path d="M465.2 269.32H469.2" stroke="#8e8e8e" stroke-width="1.2"/><path d="M465.2 273.61H469.2" stroke="#8e8e8e" stroke-width="1.2"/><path d="M465.2 277.89H469.2" stroke="#8e8e8e" stroke-width="1.2"/><path d="M464.2 282.17H469.2" stroke="#7d7d7d" stroke-width="1.2"/><path d="M465.2 286.46H469.2" stroke="#8e8e8e" stroke-width="1.2"/><path d="M465.2 290.75H469.2" stroke="#8e8e8e" stroke-width="1.2"/><path d="M465.2 295.03H469.2" stroke="#8e8e8e" stroke-width="1.2"/><path d="M465.2 299.31H469.2" stroke="#8e8e8e" stroke-width="1.2"/><path d="M463.2 303.60H469.2" stroke="#333" stroke-width="1.2"/><path d="M465.2 307.88H469.2" stroke="#8e8e8e" stroke-width="1.2"/><path d="M465.2 312.17H469.2" stroke="#8e8e8e" stroke-width="1.2"/><path d="M465.2 316.45H469.2" stroke="#8e8e8e" stroke-width="1.2"/><path d="M465.2 320.74H469.2" stroke="#8e8e8e" stroke-width="1.2"/><path d="M464.2 325.02H469.2" stroke="#7d7d7d" stroke-width="1.2"/><path d="M465.2 329.31H469.2" stroke="#8e8e8e" stroke-width="1.2"/><path d="M465.2 333.60H469.2" stroke="#8e8e8e" stroke-width="1.2"/><path d="M465.2 337.88H469.2" stroke="#8e8e8e" stroke-width="1.2"/><path d="M465.2 342.16H469.2" stroke="#8e8e8e" stroke-width="1.2"/><path d="M461 346.45H469.2" stroke="#111" stroke-width="1.2"/><path d="M465.2 350.74H469.2" stroke="#8e8e8e" stroke-width="1.2"/><path d="M465.2 355.02H469.2" stroke="#8e8e8e" stroke-width="1.2"/><path d="M465.2 359.31H469.2" stroke="#8e8e8e" stroke-width="1.2"/><path d="M465.2 363.59H469.2" stroke="#8e8e8e" stroke-width="1.2"/><path d="M464.2 367.88H469.2" stroke="#7d7d7d" stroke-width="1.2"/><path d="M465.2 372.16H469.2" stroke="#8e8e8e" stroke-width="1.2"/><path d="M465.2 376.45H469.2" stroke="#8e8e8e" stroke-width="1.2"/><path d="M465.2 380.73H469.2" stroke="#8e8e8e" stroke-width="1.2"/><path d="M465.2 385.01H469.2" stroke="#8e8e8e" stroke-width="1.2"/><path d="M463.2 389.30H469.2" stroke="#333" stroke-width="1.2"/><path d="M465.2 393.58H469.2" stroke="#8e8e8e" stroke-width="1.2"/><path d="M465.2 397.87H469.2" stroke="#8e8e8e" stroke-width="1.2"/><path d="M465.2 402.16H469.2" stroke="#8e8e8e" stroke-width="1.2"/><path d="M465.2 406.44H469.2" stroke="#8e8e8e" stroke-width="1.2"/><path d="M464.2 410.72H469.2" stroke="#7d7d7d" stroke-width="1.2"/><path d="M465.2 415.01H469.2" stroke="#8e8e8e" stroke-width="1.2"/><path d="M465.2 419.30H469.2" stroke="#8e8e8e" stroke-width="1.2"/><path d="M465.2 423.58H469.2" stroke="#8e8e8e" stroke-width="1.2"/><path d="M465.2 427.87H469.2" stroke="#8e8e8e" stroke-width="1.2"/><path d="M463.2 432.15H469.2" stroke="#333" stroke-width="1.2"/><path d="M465.2 436.44H469.2" stroke="#8e8e8e" stroke-width="1.2"/><path d="M465.2 440.72H469.2" stroke="#8e8e8e" stroke-width="1.2"/><path d="M465.2 445.00H469.2" stroke="#8e8e8e" stroke-width="1.2"/><path d="M465.2 449.29H469.2" stroke="#8e8e8e" stroke-width="1.2"/><path d="M464.2 453.57H469.2" stroke="#7d7d7d" stroke-width="1.2"/><path d="M465.2 457.86H469.2" stroke="#8e8e8e" stroke-width="1.2"/><path d="M465.2 462.15H469.2" stroke="#8e8e8e" stroke-width="1.2"/><path d="M465.2 466.43H469.2" stroke="#8e8e8e" stroke-width="1.2"/><path d="M465.2 470.71H469.2" stroke="#8e8e8e" stroke-width="1.2"/><path d="M463.2 475.00H469.2" stroke="#333" stroke-width="1.2"/><path d="M465.2 479.28H469.2" stroke="#8e8e8e" stroke-width="1.2"/><path d="M465.2 483.57H469.2" stroke="#8e8e8e" stroke-width="1.2"/><path d="M465.2 487.86H469.2" stroke="#8e8e8e" stroke-width="1.2"/><path d="M465.2 492.14H469.2" stroke="#8e8e8e" stroke-width="1.2"/><path d="M464.2 496.43H469.2" stroke="#7d7d7d" stroke-width="1.2"/><path d="M465.2 500.71H469.2" stroke="#8e8e8e" stroke-width="1.2"/><path d="M465.2 505.00H469.2" stroke="#8e8e8e" stroke-width="1.2"/><path d="M465.2 509.28H469.2" stroke="#8e8e8e" stroke-width="1.2"/><path d="M465.2 513.57H469.2" stroke="#8e8e8e" stroke-width="1.2"/><path d="M463.2 517.85H469.2" stroke="#333" stroke-width="1.2"/><path d="M465.2 522.13H469.2" stroke="#8e8e8e" stroke-width="1.2"/><path d="M465.2 526.42H469.2" stroke="#8e8e8e" stroke-width="1.2"/><path d="M465.2 530.70H469.2" stroke="#8e8e8e" stroke-width="1.2"/><path d="M465.2 534.99H469.2" stroke="#8e8e8e" stroke-width="1.2"/><path d="M464.2 539.27H469.2" stroke="#7d7d7d" stroke-width="1.2"/><path d="M465.2 543.56H469.2" stroke="#8e8e8e" stroke-width="1.2"/><path d="M465.2 547.85H469.2" stroke="#8e8e8e" stroke-width="1.2"/><path d="M465.2 552.13H469.2" stroke="#8e8e8e" stroke-width="1.2"/><path d="M465.2 556.41H469.2" stroke="#8e8e8e" stroke-width="1.2"/><path d="M461 560.70H469.2" stroke="#111" stroke-width="1.2"/><path d="M465.2 564.99H469.2" stroke="#8e8e8e" stroke-width="1.2"/><path d="M465.2 569.27H469.2" stroke="#8e8e8e" stroke-width="1.2"/><path d="M465.2 573.56H469.2" stroke="#8e8e8e" stroke-width="1.2"/><path d="M465.2 577.84H469.2" stroke="#8e8e8e" stroke-width="1.2"/><path d="M464.2 582.12H469.2" stroke="#7d7d7d" stroke-width="1.2"/><path d="M465.2 586.41H469.2" stroke="#8e8e8e" stroke-width="1.2"/><path d="M465.2 590.69H469.2" stroke="#8e8e8e" stroke-width="1.2"/><path d="M465.2 594.98H469.2" stroke="#8e8e8e" stroke-width="1.2"/><path d="M465.2 599.27H469.2" stroke="#8e8e8e" stroke-width="1.2"/><path d="M463.2 603.55H469.2" stroke="#333" stroke-width="1.2"/><path d="M465.2 607.84H469.2" stroke="#8e8e8e" stroke-width="1.2"/><path d="M465.2 612.12H469.2" stroke="#8e8e8e" stroke-width="1.2"/><path d="M465.2 616.40H469.2" stroke="#8e8e8e" stroke-width="1.2"/><path d="M465.2 620.69H469.2" stroke="#8e8e8e" stroke-width="1.2"/><path d="M464.2 624.97H469.2" stroke="#7d7d7d" stroke-width="1.2"/><path d="M465.2 629.26H469.2" stroke="#8e8e8e" stroke-width="1.2"/><path d="M465.2 633.54H469.2" stroke="#8e8e8e" stroke-width="1.2"/><path d="M465.2 637.83H469.2" stroke="#8e8e8e" stroke-width="1.2"/><path d="M465.2 642.12H469.2" stroke="#8e8e8e" stroke-width="1.2"/><path d="M463.2 646.40H469.2" stroke="#333" stroke-width="1.2"/><path d="M465.2 650.68H469.2" stroke="#8e8e8e" stroke-width="1.2"/><path d="M465.2 654.97H469.2" stroke="#8e8e8e" stroke-width="1.2"/><path d="M465.2 659.26H469.2" stroke="#8e8e8e" stroke-width="1.2"/><path d="M465.2 663.54H469.2" stroke="#8e8e8e" stroke-width="1.2"/><path d="M464.2 667.83H469.2" stroke="#7d7d7d" stroke-width="1.2"/><path d="M465.2 672.11H469.2" stroke="#8e8e8e" stroke-width="1.2"/><path d="M465.2 676.39H469.2" stroke="#8e8e8e" stroke-width="1.2"/><path d="M465.2 680.68H469.2" stroke="#8e8e8e" stroke-width="1.2"/><path d="M465.2 684.97H469.2" stroke="#8e8e8e" stroke-width="1.2"/><path d="M463.2 689.25H469.2" stroke="#333" stroke-width="1.2"/><path d="M465.2 693.54H469.2" stroke="#8e8e8e" stroke-width="1.2"/><path d="M465.2 697.82H469.2" stroke="#8e8e8e" stroke-width="1.2"/><path d="M465.2 702.11H469.2" stroke="#8e8e8e" stroke-width="1.2"/><path d="M465.2 706.39H469.2" stroke="#8e8e8e" stroke-width="1.2"/><path d="M464.2 710.67H469.2" stroke="#7d7d7d" stroke-width="1.2"/><path d="M465.2 714.96H469.2" stroke="#8e8e8e" stroke-width="1.2"/><path d="M465.2 719.24H469.2" stroke="#8e8e8e" stroke-width="1.2"/><path d="M465.2 723.53H469.2" stroke="#8e8e8e" stroke-width="1.2"/><path d="M465.2 727.82H469.2" stroke="#8e8e8e" stroke-width="1.2"/><path d="M463.2 732.10H469.2" stroke="#333" stroke-width="1.2"/><path d="M465.2 736.38H469.2" stroke="#8e8e8e" stroke-width="1.2"/><path d="M465.2 740.67H469.2" stroke="#8e8e8e" stroke-width="1.2"/><path d="M465.2 744.95H469.2" stroke="#8e8e8e" stroke-width="1.2"/><path d="M465.2 749.24H469.2" stroke="#8e8e8e" stroke-width="1.2"/><path d="M464.2 753.53H469.2" stroke="#7d7d7d" stroke-width="1.2"/><path d="M465.2 757.81H469.2" stroke="#8e8e8e" stroke-width="1.2"/><path d="M465.2 762.10H469.2" stroke="#8e8e8e" stroke-width="1.2"/><path d="M465.2 766.38H469.2" stroke="#8e8e8e" stroke-width="1.2"/><path d="M465.2 770.66H469.2" stroke="#8e8e8e" stroke-width="1.2"/><path d="M461 774.95H469.2" stroke="#111" stroke-width="1.2"/><path d="M465.2 779.24H469.2" stroke="#8e8e8e" stroke-width="1.2"/><path d="M465.2 783.52H469.2" stroke="#8e8e8e" stroke-width="1.2"/><path d="M465.2 787.81H469.2" stroke="#8e8e8e" stroke-width="1.2"/><path d="M465.2 792.09H469.2" stroke="#8e8e8e" stroke-width="1.2"/><path d="M464.2 796.38H469.2" stroke="#7d7d7d" stroke-width="1.2"/><path d="M465.2 800.66H469.2" stroke="#8e8e8e" stroke-width="1.2"/><path d="M465.2 804.94H469.2" stroke="#8e8e8e" stroke-width="1.2"/><path d="M465.2 809.23H469.2" stroke="#8e8e8e" stroke-width="1.2"/><path d="M465.2 813.52H469.2" stroke="#8e8e8e" stroke-width="1.2"/><path d="M463.2 817.80H469.2" stroke="#333" stroke-width="1.2"/></svg>
<div class="a" style="left:440px;top:89px;width:29px;height:729px;overflow:hidden">
<div class="t" style="right:10px;top:36.6px;font-size:13.5px;color:#111">0.0</div>
<div class="t" style="right:8.6px;top:80.8px;font-size:11.5px;color:#444">1.0</div>
<div class="t" style="right:8.6px;top:123.7px;font-size:11.5px;color:#444">2.0</div>
<div class="t" style="right:8.6px;top:166.6px;font-size:11.5px;color:#444">3.0</div>
<div class="t" style="right:8.6px;top:209.4px;font-size:11.5px;color:#444">4.0</div>
<div class="t" style="right:10px;top:250.8px;font-size:13.5px;color:#111">5.0</div>
<div class="t" style="right:8.6px;top:295.1px;font-size:11.5px;color:#444">6.0</div>
<div class="t" style="right:8.6px;top:337.9px;font-size:11.5px;color:#444">7.0</div>
<div class="t" style="right:8.6px;top:380.8px;font-size:11.5px;color:#444">8.0</div>
<div class="t" style="right:8.6px;top:423.7px;font-size:11.5px;color:#444">9.0</div>
<div class="t" style="right:10px;top:465.1px;font-size:13.5px;color:#111">10.0</div>
<div class="t" style="right:8.6px;top:509.3px;font-size:11.5px;color:#444">11.0</div>
<div class="t" style="right:8.6px;top:552.2px;font-size:11.5px;color:#444">12.0</div>
<div class="t" style="right:8.6px;top:595.0px;font-size:11.5px;color:#444">13.0</div>
<div class="t" style="right:8.6px;top:637.9px;font-size:11.5px;color:#444">14.0</div>
<div class="t" style="right:10px;top:679.4px;font-size:13.5px;color:#111">15.0</div>
<div class="t" style="right:8.6px;top:723.6px;font-size:11.5px;color:#444">16.0</div>
</div>
<svg class="a" style="left:1365px;top:132px;" width="17" height="17" viewBox="0 0 17 17" fill="none" stroke-linejoin="round" stroke-linecap="round"><rect x="1" y="1" width="15" height="15" rx="2" fill="#e9eef4" stroke="#1f6fa6" stroke-width="1.4"/><path d="M1.5 4.5H15.5" stroke="#1f6fa6" stroke-width="1.2"/><path d="M5.5 8L3.5 10L5.5 12M11.5 8L13.5 10L11.5 12M9.5 7.5L7.5 12.5" stroke="#1f6fa6" stroke-width="1.2"/></svg>
<div class="t" style="left:567px;top:206px;font-size:38px;font-weight:bold;color:#000;transform-origin:0 0;transform:scaleX(1.24);-webkit-text-stroke:2px #000">Indirizzario Clienti</div>
<div class="t" style="left:1055px;top:214px;font-size:14.5px;font-weight:bold;color:#000;transform-origin:0 0;transform:scaleX(1.17);-webkit-text-stroke:.4px #000">Stampato il 25/07/2024, 10:46:21</div>
<div class="a" style="left:502px;top:282px;width:860px;height:1px;background:#2a2a2a"></div>
<div class="a" style="left:502px;top:304px;width:860px;height:1px;background:#2a2a2a"></div>
<div class="t rpt" style="left:502px;top:287px">Cliente</div>
<div class="t rpt" style="left:847px;top:288px">Indirizzo</div>
<div class="a" style="left:502px;top:336px;width:860px;height:27px;background:#bbbbbb"></div>
<div class="a" style="left:502px;top:390px;width:860px;height:27px;background:#bbbbbb"></div>
<div class="a" style="left:502px;top:444px;width:860px;height:27px;background:#bbbbbb"></div>
<div class="a" style="left:502px;top:498px;width:860px;height:27px;background:#bbbbbb"></div>
<div class="a" style="left:502px;top:552px;width:860px;height:27px;background:#bbbbbb"></div>
<div class="t rpt" style="left:502px;top:317px">ACL SRL</div>
<div class="t rpt" style="left:847px;top:318px">VIA MOLINETTO, 3</div>
<div class="t rpt" style="left:502px;top:344px">Avv.Francesco Maria Lalli</div>
<div class="t rpt" style="left:847px;top:345px">Via della Serpentara 12</div>
<div class="t rpt" style="left:502px;top:371px">BOLUCE ILLUMINAZIONE SRL</div>
<div class="t rpt" style="left:847px;top:372px">LARGO GARIBALDI 2</div>
<div class="t rpt" style="left:502px;top:398px">CASA DEL TAPPEZZIERE</div>
<div class="t rpt" style="left:847px;top:399px">LARGO GARIBALDI 2</div>
<div class="t rpt" style="left:502px;top:425px">CB</div>
<div class="t rpt" style="left:847px;top:426px">WELWYN GARDEN CITY</div>
<div class="t rpt" style="left:502px;top:452px">Cliente al banco</div>
<div class="t rpt" style="left:502px;top:479px">Clienti Cee</div>
<div class="t rpt" style="left:502px;top:506px">Clienti corrispettivi</div>
<div class="t rpt" style="left:502px;top:533px">COLOMBO R. SRL</div>
<div class="t rpt" style="left:847px;top:534px">VIA PUECHER, 1</div>
<div class="t rpt" style="left:502px;top:560px">COSTEL</div>
<div class="t rpt" style="left:847px;top:561px">RUE DE L'AMBASSADEUR - BP8</div>
<div class="a" style="left:1396px;top:89px;width:44px;height:756px;background:linear-gradient(90deg,#c9c9c9 0,#c9c9c9 1px,#efefef 2px,#e2e2e2 55%,#d2d2d2 95%,#c2c2c2 100%)"></div>
<div class="a" style="left:1403px;top:97px;width:2px;height:2px;background:#8a8a8a"></div>
<div class="a" style="left:1409px;top:97px;width:2px;height:2px;background:#8a8a8a"></div>
<div class="a" style="left:1415px;top:97px;width:2px;height:2px;background:#8a8a8a"></div>
<div class="a" style="left:1421px;top:97px;width:2px;height:2px;background:#8a8a8a"></div>
<div class="a" style="left:1427px;top:97px;width:2px;height:2px;background:#8a8a8a"></div>
<div class="a" style="left:1397.5px;top:101px;width:40.5px;height:42px;background:#c6c6c6;border-radius:4px"></div>
<svg class="a" style="left:1398px;top:102px" width="40" height="40" viewBox="1398 102 40 40" fill="none" stroke-linejoin="round" stroke-linecap="round"><rect x="1401.8" y="105.8" width="32.2" height="32.2" rx="4.5" fill="#0b6ca6"/><path d="M1407.8 110.6Q1410.4 110.8 1410.4 113V131.2Q1410.4 133.4 1407.8 133.6M1413 110.6Q1410.4 110.8 1410.4 113M1410.4 131.2Q1410.4 133.4 1413 133.6" stroke="#fff" stroke-width="1.1"/><circle cx="1410.4" cy="121.9" r="1.3" fill="#fff"/><path d="M1416.9 110.6L1429.9 123.6L1424.4 126.7L1418.9 128.7Z" fill="#5b9fca" stroke="#fff" stroke-width="1.3"/><path d="M1424.7 126.9L1427.3 132.5" stroke="#fff" stroke-width="1.3"/></svg>
<svg class="a" style="left:1400px;top:150px" width="36" height="36" viewBox="1400 150 36 36" fill="none" stroke-linejoin="round" stroke-linecap="round"><rect x="1401.7" y="152" width="32" height="32" rx="4.2" fill="#838383"/><rect x="1406.5" y="156.4" width="23" height="4.4" rx="2" stroke="#f4f4f4" stroke-width="1.25"/><rect x="1406" y="163" width="24" height="9.7" fill="#f4f4f4"/><rect x="1406.5" y="175.4" width="23" height="4.6" rx="2" stroke="#f4f4f4" stroke-width="1.25"/></svg>
<svg class="a" style="left:1400px;top:196px" width="36" height="36" viewBox="1400 196 36 36" fill="none" stroke-linejoin="round" stroke-linecap="round"><rect x="1401.7" y="198" width="32" height="32" rx="4.2" fill="#838383"/><path d="M1406 206.9V204.3a2 2 0 0 1 2-2H1428a2 2 0 0 1 2 2V206.9Z" fill="#f4f4f4"/><rect x="1406.5" y="209.2" width="23" height="9.6" stroke="#f4f4f4" stroke-width="1.25"/><rect x="1406.5" y="221.2" width="23" height="4.6" rx="2" stroke="#f4f4f4" stroke-width="1.25"/></svg>
<svg class="a" style="left:1400px;top:242px" width="36" height="36" viewBox="1400 242 36 36" fill="none" stroke-linejoin="round" stroke-linecap="round"><rect x="1401.7" y="244" width="32" height="32" rx="4.2" fill="#838383"/><rect x="1406.5" y="248.2" width="23" height="4.4" rx="2" stroke="#f4f4f4" stroke-width="1.25"/><rect x="1406.5" y="255.4" width="23" height="9.2" stroke="#f4f4f4" stroke-width="1.25"/><path d="M1406 267H1430V270a2 2 0 0 1-2 2H1408a2 2 0 0 1-2-2Z" fill="#f4f4f4"/></svg>
<svg class="a" style="left:1400px;top:288px" width="36" height="36" viewBox="1400 288 36 36" fill="none" stroke-linejoin="round" stroke-linecap="round"><rect x="1401.7" y="290" width="32" height="32" rx="4.2" fill="#838383"/><rect x="1406.5" y="294.4" width="23" height="9.2" stroke="#f4f4f4" stroke-width="1.25"/><rect x="1406.5" y="308.2" width="23" height="9.4" stroke="#f4f4f4" stroke-width="1.25"/><path d="M1411.8 296.4L1409 299L1411.8 301.6M1415 296.4L1417.8 299L1415 301.6" stroke="#f4f4f4" stroke-width="1.25"/></svg>
<svg class="a" style="left:1400px;top:334px" width="36" height="36" viewBox="1400 334 36 36" fill="none" stroke-linejoin="round" stroke-linecap="round"><rect x="1401.7" y="336" width="32" height="32" rx="4.2" fill="#838383"/><path d="M1409.1 363.1L1417.7 342.2" stroke="#f4f4f4" stroke-width="1.25"/><path d="M1417.7 342.2L1423.2 356.6M1412.4 355.4H1421.4" stroke="#f4f4f4" stroke-width="1.25" stroke-dasharray="2.6 1.8" stroke-linecap="butt"/><path d="M1426.3 355.6V364.8M1421.7 360.2H1430.9" stroke="#f4f4f4" stroke-width="1.25"/></svg>
<svg class="a" style="left:1400px;top:380px" width="36" height="36" viewBox="1400 380 36 36" fill="none" stroke-linejoin="round" stroke-linecap="round"><rect x="1401.7" y="382" width="32" height="32" rx="4.2" fill="#838383"/><path d="M1404.6 411.1L1424 391.4" stroke="#f4f4f4" stroke-width="1.25" stroke-dasharray="3 2" stroke-linecap="butt"/><path d="M1426.3 385V394M1421.8 389.5H1430.8" stroke="#f4f4f4" stroke-width="1.25"/></svg>
<svg class="a" style="left:1400px;top:426px" width="36" height="36" viewBox="1400 426 36 36" fill="none" stroke-linejoin="round" stroke-linecap="round"><rect x="1401.7" y="428" width="32" height="32" rx="4.2" fill="#838383"/><path d="M1409.7 435.4H1422.3M1426.6 440V448" stroke="#f4f4f4" stroke-width="1.25" stroke-dasharray="3 2" stroke-linecap="butt"/><path d="M1409.7 435.4V452.6H1426.6V448" stroke="#f4f4f4" stroke-width="1.25" stroke-linejoin="miter"/><path d="M1426.6 430.9V439.9M1422.1 435.4H1431.1" stroke="#f4f4f4" stroke-width="1.25"/></svg>
<svg class="a" style="left:1400px;top:472px" width="36" height="36" viewBox="1400 472 36 36" fill="none" stroke-linejoin="round" stroke-linecap="round"><rect x="1401.7" y="474" width="32" height="32" rx="4.2" fill="#838383"/><rect x="1407.4" y="479.4" width="21.7" height="21.2" rx="2" stroke="#f4f4f4" stroke-width="1.25"/><path d="M1407.6 493.1L1413.1 488.3L1417.7 492.9L1423.4 487.3L1429 491.8" stroke="#f4f4f4" stroke-width="1.25"/><circle cx="1420.6" cy="483.8" r="1.7" stroke="#f4f4f4" stroke-width="1.25"/></svg>
<svg class="a" style="left:1400px;top:518px" width="36" height="36" viewBox="1400 518 36 36" fill="none" stroke-linejoin="round" stroke-linecap="round"><rect x="1401.7" y="520" width="32" height="32" rx="4.2" fill="#838383"/><path d="M1410 524.3H1421.7L1427.4 530V545.9a1.8 1.8 0 0 1-1.8 1.8H1410a1.8 1.8 0 0 1-1.8-1.8V526.1a1.8 1.8 0 0 1 1.8-1.8Z" stroke="#f4f4f4" stroke-width="1.25"/><path d="M1421.7 524.5V528.2a1.8 1.8 0 0 0 1.8 1.8H1427.2" stroke="#f4f4f4" stroke-width="1.25"/><path d="M1415.9 535.6L1414.6 545M1419.6 535.6L1418.3 545M1413.2 538.6H1421.4M1412.6 542H1420.8" stroke="#f4f4f4" stroke-width="1.3" stroke-linecap="butt"/></svg>
<svg class="a" style="left:1400px;top:564px" width="36" height="36" viewBox="1400 564 36 36" fill="none" stroke-linejoin="round" stroke-linecap="round"><rect x="1401.7" y="566" width="32" height="32" rx="4.2" fill="#838383"/><rect x="1405.1" y="571.7" width="23.5" height="17.2" rx="1.5" stroke="#f4f4f4" stroke-width="1.25"/><path d="M1409.7 569.4V573M1424.6 569.4V573" stroke="#f4f4f4" stroke-width="1.25"/><path d="M1408.3 575.7H1427M1408.3 578.6H1427M1408.3 581.4H1423M1408.3 584.3H1419" stroke="#f4f4f4" stroke-width="1.1" stroke-dasharray="2.6 1.6" stroke-linecap="butt"/><circle cx="1425.1" cy="588.9" r="6.2" fill="#838383" stroke="#f4f4f4" stroke-width="1.25"/><path d="M1422.2 588.9L1424.4 591L1428 587" stroke="#f4f4f4" stroke-width="1.25"/></svg>
<div class="a" style="left:439px;top:818px;width:957px;height:27px;background:#d4d4d4"></div>
<svg class="a" style="left:442px;top:823px" width="20" height="20" viewBox="442 823 20 20" fill="none" stroke-linejoin="round" stroke-linecap="round"><rect x="444.4" y="825.5" width="15.3" height="14.9" rx="2" fill="#dcdcdc" stroke="#1f6fa6" stroke-width="1.3"/><rect x="447.4" y="828.5" width="9" height="9" rx=".8" fill="#cdd7e4" stroke="#1f6fa6" stroke-width="1.2"/><path d="M449.4 830.4H452.6M449.4 832.5H453.6M447.4 835.3H456.4" stroke="#1f6fa6" stroke-width="1.1"/></svg>
<div class="a" style="left:915px;top:818px;width:5.5px;height:3px;background:#adadad;border-radius:1.5px"></div>
<div class="a" style="left:0;top:845px;width:1440px;height:2px;background:#a9a9a9"></div>
<div class="a" style="left:0;top:847px;width:1440px;height:29px;background:linear-gradient(#ebebeb,#d5d5d5 55%,#bdbdbd)"></div>
<div class="t" style="left:2px;top:856px;font-size:11px;color:#1a1a1a;letter-spacing:.35px">Nessun elemento selezionato</div>
<div class="t" style="left:458px;top:856.5px;font-size:11px;color:#1a1a1a;letter-spacing:.3px">Amministratore</div>
<div class="t" style="left:1277px;top:856.3px;font-size:11px;color:#1a1a1a;letter-spacing:.35px">Zoom:</div>
<div class="a" style="left:1317px;top:851px;width:75px;height:20px;background:#fff;border-radius:4px;box-shadow:0 0 0 .5px rgba(0,0,0,.2),0 .5px 1px rgba(0,0,0,.2)"></div>
<div class="t" style="left:1319px;top:855px;font-size:12px;color:#1a1a1a">85.0%</div>
<div class="a" style="left:1374px;top:853px;width:16px;height:16px;background:#1a82fb;border-radius:4px"></div>
<svg class="a" style="left:1376px;top:856px;" width="12" height="10" viewBox="0 0 12 10" fill="none" stroke-linejoin="round" stroke-linecap="round"><path d="M3 3.5L6 6.5L9 3.5" stroke="#fff" stroke-width="1.5"/></svg>
<svg class="a" style="left:1400px;top:852px;" width="20" height="20" viewBox="0 0 20 20" fill="none" stroke-linejoin="round" stroke-linecap="round"><rect x="4.6" y="1.6" width="12" height="12.4" rx="2" fill="#b9c9da" stroke="#1f6fa6" stroke-width="1.3"/><rect x="1.6" y="9.6" width="7.6" height="7.6" rx="1.5" fill="#d3dde8" stroke="#1f6fa6" stroke-width="1.3"/><path d="M9.5 9L13.5 5M10.5 4.6H13.8V8" stroke="#1f6fa6" stroke-width="1.4"/></svg>
<svg class="a" style="left:1420px;top:852px;" width="20" height="20" viewBox="0 0 20 20" fill="none" stroke-linejoin="round" stroke-linecap="round"><rect x="4.6" y="1.6" width="12" height="12.4" rx="2" fill="#dde4ec" stroke="#1f6fa6" stroke-width="1.3"/><rect x="1.6" y="9.6" width="7.6" height="7.6" rx="1.5" fill="#b9c9da" stroke="#1f6fa6" stroke-width="1.3"/><path d="M14 4.5L10 8.5M9.8 5.5V8.8H13" stroke="#1f6fa6" stroke-width="1.4"/></svg>
</div>
<div class="a" style="left:0;top:0;width:1440px;height:876px;border-radius:10px;border-top:1px solid #777;box-shadow:inset 0 1px 0 #e2e2e2;pointer-events:none"></div>
</body></html>
